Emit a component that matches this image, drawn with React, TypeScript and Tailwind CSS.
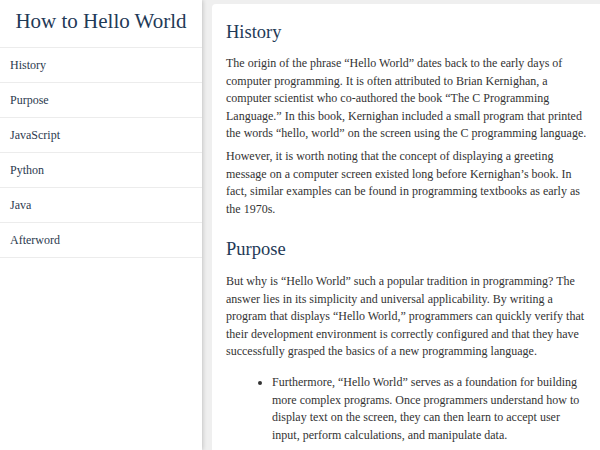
export default function App() {
  const nav = ["History", "Purpose", "JavaScript", "Python", "Java", "Afterword"]

  return (
    <div className="flex h-[450px] w-[600px] overflow-hidden bg-[#efefef] font-['Liberation_Serif',serif]">
      {/* Sidebar */}
      <aside className="relative z-10 h-full w-[202px] shrink-0 bg-white shadow-[1px_0_4px_rgba(0,0,0,0.18)]">
        <h1 className="flex h-[47px] items-center justify-center whitespace-nowrap pb-[4px] text-[21px] text-[#1f3a57]">
          How to Hello World
        </h1>
        <ul className="border-t border-[#ececec]">
          {nav.map((item) => (
            <li
              key={item}
              className="flex h-[35px] items-center border-b border-[#ececec] pl-[10px] text-[12px] text-[#2b3a4e]"
            >
              {item}
            </li>
          ))}
        </ul>
      </aside>

      {/* Content */}
      <main className="ml-[10px] mt-[4px] min-w-0 flex-1 rounded-tl-[4px] bg-white pl-[14px] pt-[15px] text-[#333]">
        <div className="w-[390px] text-[12px] leading-[17.5px]">
          <h2 className="text-[18.5px] leading-[26px] text-[#1f3a57]">History</h2>
          <p className="mt-[10px]">
            The origin of the phrase “Hello World” dates back to the early days of
            <br />
            computer programming. It is often attributed to Brian Kernighan, a
            <br />
            computer scientist who co-authored the book “The C Programming
            <br />
            Language.” In this book, Kernighan included a small program that printed
            <br />
            the words “hello, world” on the screen using the C programming language.
          </p>
          <p className="mt-[5.5px]">
            However, it is worth noting that the concept of displaying a greeting
            <br />
            message on a computer screen existed long before Kernighan’s book. In
            <br />
            fact, similar examples can be found in programming textbooks as early as
            <br />
            the 1970s.
          </p>
          <h2 className="mt-[18px] text-[18.5px] leading-[26px] text-[#1f3a57]">Purpose</h2>
          <p className="mt-[11px]">
            But why is “Hello World” such a popular tradition in programming? The
            <br />
            answer lies in its simplicity and universal applicability. By writing a
            <br />
            program that displays “Hello World,” programmers can quickly verify that
            <br />
            their development environment is correctly configured and that they have
            <br />
            successfully grasped the basics of a new programming language.
          </p>
          <ul className="mt-[13.5px] list-disc pl-[46px]">
            <li>
              Furthermore, “Hello World” serves as a foundation for building
              <br />
              more complex programs. Once programmers understand how to
              <br />
              display text on the screen, they can then learn to accept user
              <br />
              input, perform calculations, and manipulate data.
            </li>
          </ul>
        </div>
      </main>
    </div>
  )
}
